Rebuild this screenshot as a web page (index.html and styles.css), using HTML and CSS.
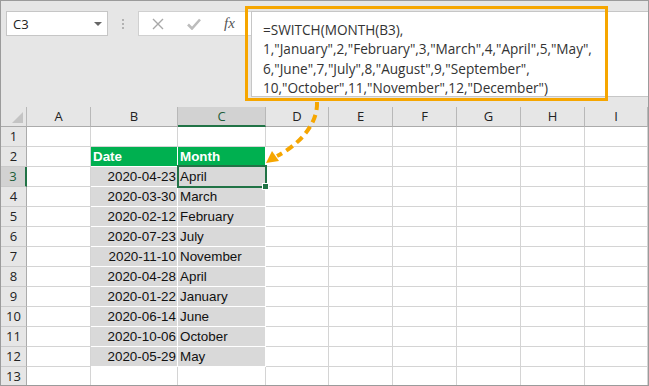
FILE: index.html
```html
<!DOCTYPE html>
<html lang="en">
<head>
  <meta charset="UTF-8" />
  <title>SWITCH MONTH</title>
  <link rel="stylesheet" href="styles.css">
</head>
<body>
  <div class="sheet">
    <div class="toolbar">
      <div class="namebox"><span>C3</span><span class="caret"></span></div>
      <div class="grip"><i></i><i></i><i></i></div>
      <div class="fxbtns">
        <svg class="ico x" width="12" height="12" viewBox="0 0 12 12"><path d="M1 1L11 11M11 1L1 11" stroke="#a8a8a8" stroke-width="1.4" fill="none"/></svg>
        <svg class="ico ok" width="14" height="12" viewBox="0 0 14 12"><path d="M1 6.5L5 10.5L13 1.5" stroke="#bcbcbc" stroke-width="2.6" fill="none"/></svg>
        <span class="fx">fx</span>
      </div>
      <div class="formula">
        <div>=SWITCH(MONTH(B3),</div>
        <div>1,"January",2,"February",3,"March",4,"April",5,"May",</div>
        <div>6,"June",7,"July",8,"August",9,"September",</div>
        <div>10,"October",11,"November",12,"December")</div>
      </div>
    </div>

    <div class="grid">
      <div class="ch corner"><span class="tri"></span></div>
      <div class="ch">A</div><div class="ch">B</div><div class="ch sel">C</div><div class="ch">D</div><div class="ch">E</div><div class="ch">F</div><div class="ch">G</div><div class="ch">H</div><div class="ch">I</div>

      <div class="rh">1</div><div class="c"></div><div class="c"></div><div class="c"></div><div class="c"></div><div class="c"></div><div class="c"></div><div class="c"></div><div class="c"></div><div class="c"></div>
      <div class="rh">2</div><div class="c"></div><div class="c hd">Date</div><div class="c hd">Month</div><div class="c"></div><div class="c"></div><div class="c"></div><div class="c"></div><div class="c"></div><div class="c"></div>
      <div class="rh sel">3</div><div class="c"></div><div class="c g num">2020-04-23</div><div class="c g">April</div><div class="c"></div><div class="c"></div><div class="c"></div><div class="c"></div><div class="c"></div><div class="c"></div>
      <div class="rh">4</div><div class="c"></div><div class="c g num">2020-03-30</div><div class="c g">March</div><div class="c"></div><div class="c"></div><div class="c"></div><div class="c"></div><div class="c"></div><div class="c"></div>
      <div class="rh">5</div><div class="c"></div><div class="c g num">2020-02-12</div><div class="c g">February</div><div class="c"></div><div class="c"></div><div class="c"></div><div class="c"></div><div class="c"></div><div class="c"></div>
      <div class="rh">6</div><div class="c"></div><div class="c g num">2020-07-23</div><div class="c g">July</div><div class="c"></div><div class="c"></div><div class="c"></div><div class="c"></div><div class="c"></div><div class="c"></div>
      <div class="rh">7</div><div class="c"></div><div class="c g num">2020-11-10</div><div class="c g">November</div><div class="c"></div><div class="c"></div><div class="c"></div><div class="c"></div><div class="c"></div><div class="c"></div>
      <div class="rh">8</div><div class="c"></div><div class="c g num">2020-04-28</div><div class="c g">April</div><div class="c"></div><div class="c"></div><div class="c"></div><div class="c"></div><div class="c"></div><div class="c"></div>
      <div class="rh">9</div><div class="c"></div><div class="c g num">2020-01-22</div><div class="c g">January</div><div class="c"></div><div class="c"></div><div class="c"></div><div class="c"></div><div class="c"></div><div class="c"></div>
      <div class="rh">10</div><div class="c"></div><div class="c g num">2020-06-14</div><div class="c g">June</div><div class="c"></div><div class="c"></div><div class="c"></div><div class="c"></div><div class="c"></div><div class="c"></div>
      <div class="rh">11</div><div class="c"></div><div class="c g num">2020-10-06</div><div class="c g">October</div><div class="c"></div><div class="c"></div><div class="c"></div><div class="c"></div><div class="c"></div><div class="c"></div>
      <div class="rh">12</div><div class="c"></div><div class="c g num">2020-05-29</div><div class="c g">May</div><div class="c"></div><div class="c"></div><div class="c"></div><div class="c"></div><div class="c"></div><div class="c"></div>
      <div class="rh">13</div><div class="c"></div><div class="c"></div><div class="c"></div><div class="c"></div><div class="c"></div><div class="c"></div><div class="c"></div><div class="c"></div><div class="c"></div>
    </div>

    <!-- active cell C3 -->
    <div class="active"><span class="handle"></span></div>

    <!-- callout -->
    <div class="callout"></div>
    <svg class="arrow" width="649" height="386" viewBox="0 0 649 386">
      <path d="M317 102C318 122 302 143 277 156" stroke="#f6a600" stroke-width="4" stroke-dasharray="8 5" fill="none"/>
      <polygon points="266,163 272,151 279,161" fill="#f6a600"/>
    </svg>
  </div>
</body>
</html>
```

FILE: styles.css
```css
body {
  margin: 0;
  font-family: 'Liberation Sans', Arial, sans-serif;
  background: #fff;
}
.sheet {
  position: relative;
  width: 649px;
  height: 386px;
  box-sizing: border-box;
  border: 1px solid #9b9b9b;
  background: #e6e6e6;
  overflow: hidden;
}

/* formula bar */
.toolbar {
  display: flex;
  align-items: flex-start;
  height: 106px;
  padding-top: 10px;
  box-sizing: border-box;
}
.namebox {
  display: flex;
  align-items: center;
  justify-content: space-between;
  margin-left: 5px;
  width: 102px;
  height: 25px;
  box-sizing: border-box;
  padding: 0 5px 0 6px;
  background: #fff;
  border: 1px solid #c6c6c6;
  font-family: 'Open Sans', sans-serif;
  font-size: 13px;
  color: #222;
}
.caret {
  width: 0;
  height: 0;
  border-left: 4px solid transparent;
  border-right: 4px solid transparent;
  border-top: 4px solid #666;
}
.grip {
  width: 30px;
  height: 25px;
  display: flex;
  flex-direction: column;
  align-items: center;
  justify-content: center;
  gap: 2px;
}
.grip i {
  width: 2px;
  height: 2px;
  background: #b2b2b2;
}
.fxbtns {
  display: flex;
  align-items: center;
  width: 113px;
  height: 25px;
  box-sizing: border-box;
  padding-left: 13px;
  background: #fff;
  border: 1px solid #d0d0d0;
  border-right: none;
}
.fxbtns .x {
  margin-right: 23px;
}
.fxbtns .ok {
  margin-right: 23px;
}
.fx {
  font-family: 'Liberation Serif', serif;
  font-style: italic;
  font-size: 15px;
  color: #555;
}
.formula {
  flex: 1;
  height: 86px;
  box-sizing: border-box;
  padding: 8px 0 0 11px;
  background: #fff;
  border: 1px solid #c6c6c6;
  border-right: none;
  font-family: 'Open Sans', sans-serif;
  font-size: 13.6px;
  line-height: 19.4px;
  color: #333;
  white-space: nowrap;
}

/* worksheet */
.grid {
  display: grid;
  grid-template-columns: 26px 64px 87px 88px 63px 64px 64px 64px 64px 63px;
  grid-auto-rows: 20px;
  background: #fff;
  font-size: 13.4px;
  color: #111;
}
.grid > div {
  box-sizing: border-box;
  border-right: 1px solid #d4d4d4;
  border-bottom: 1px solid #d4d4d4;
  line-height: 19px;
  white-space: nowrap;
  overflow: hidden;
}
.grid > .ch {
  position: relative;
  background: #e6e6e6;
  border-right-color: #b8b8b8;
  border-bottom-color: #ababab;
  text-align: center;
  font-family: 'Open Sans', sans-serif;
  font-size: 13px;
  color: #222;
}
.grid > .ch.sel {
  background: #d2d2d2;
  border-bottom: 2px solid #217346;
  line-height: 18px;
  color: #1e5d3a;
}
.tri {
  position: absolute;
  right: 3px;
  bottom: 3px;
  width: 0;
  height: 0;
  border-left: 11px solid transparent;
  border-bottom: 11px solid #c4c4c4;
}
.grid > .rh {
  background: #e6e6e6;
  border-right-color: #ababab;
  border-bottom-color: #cacaca;
  text-align: center;
  font-family: 'Open Sans', sans-serif;
  font-size: 13px;
  color: #222;
}
.grid > .rh.sel {
  background: #d2d2d2;
  border-right: 2px solid #217346;
  color: #1e5d3a;
}
.grid > .c {
  padding: 0 2px;
}
.grid > .g {
  background: #d9d9d9;
  border-color: #fff;
}
.grid > .hd {
  background: #00b050;
  border-color: #fff;
  color: #fff;
  font-weight: bold;
}
.grid > .num {
  text-align: right;
  padding-right: 1px;
}

/* overlays */
.active {
  position: absolute;
  left: 176px;
  top: 164px;
  width: 90px;
  height: 23px;
  box-sizing: border-box;
  border: 2px solid #217346;
}
.handle {
  position: absolute;
  right: -4px;
  bottom: -4px;
  width: 5px;
  height: 5px;
  background: #217346;
  border: 1px solid #fff;
}
.callout {
  position: absolute;
  left: 244px;
  top: 5px;
  width: 363px;
  height: 95px;
  box-sizing: border-box;
  border: 3px solid #f6a600;
}
.arrow {
  position: absolute;
  left: -1px;
  top: -1px;
  pointer-events: none;
}
```
